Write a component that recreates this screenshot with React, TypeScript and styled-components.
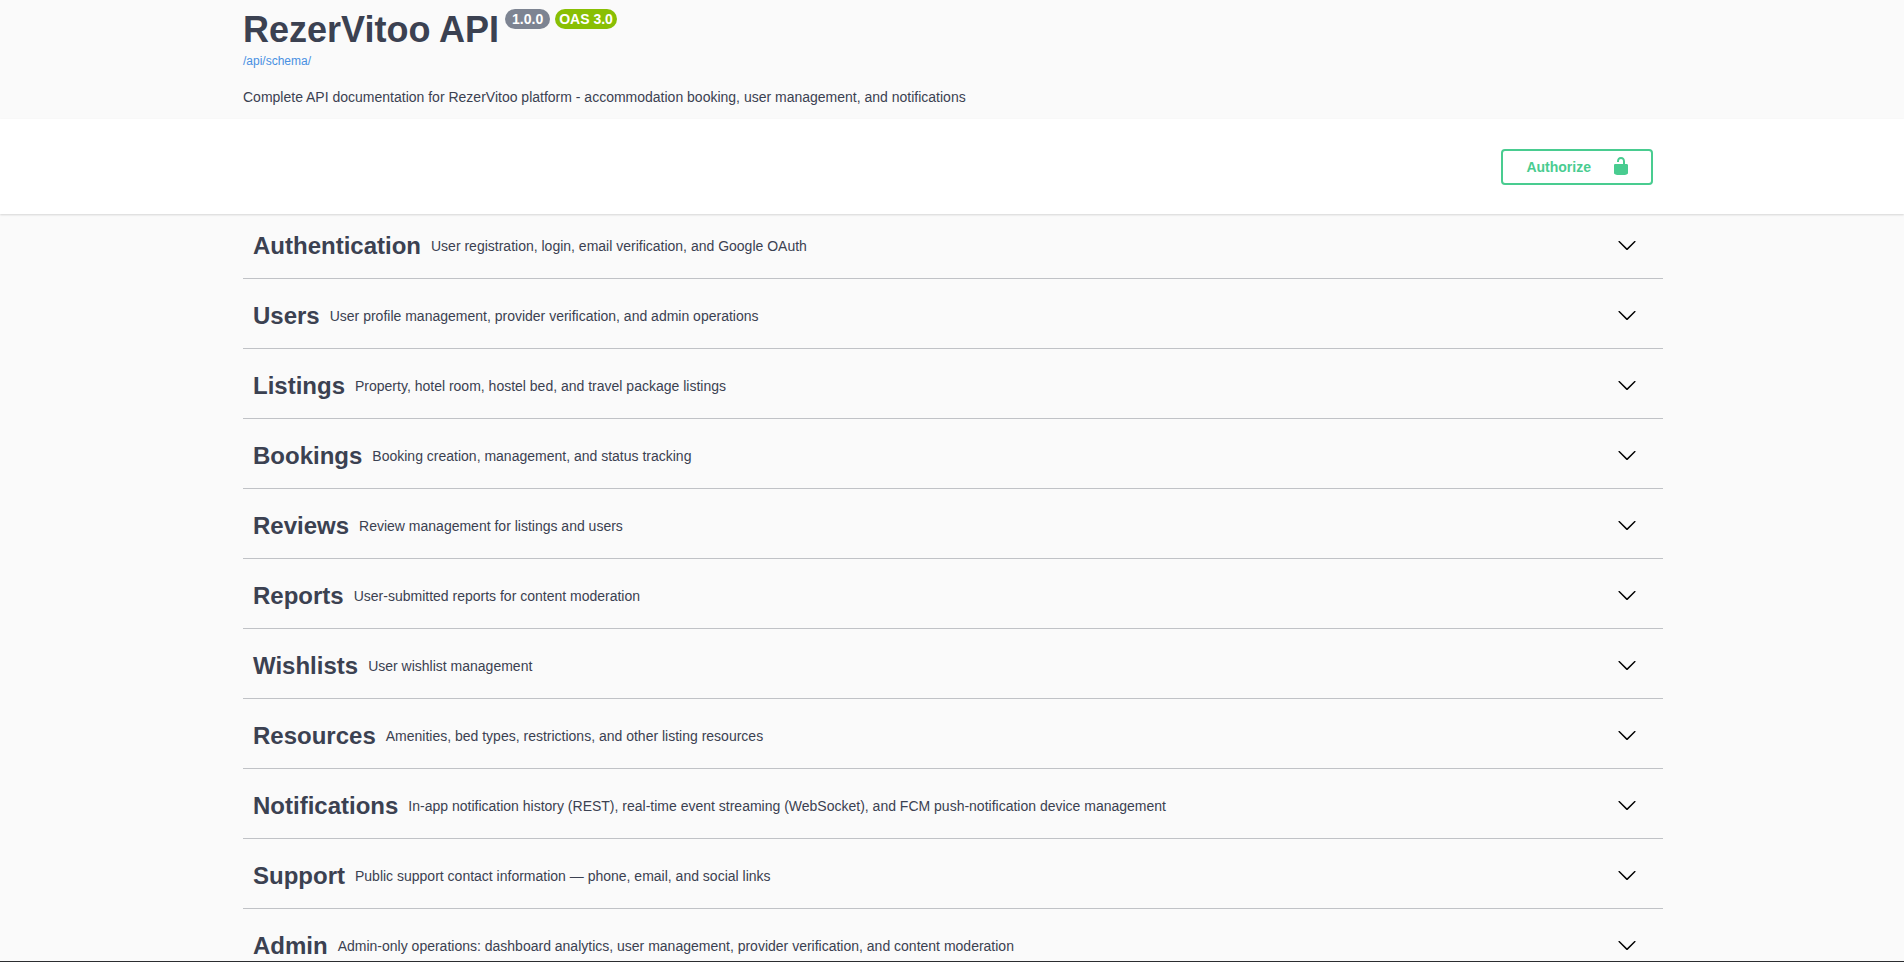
import React from "react";
import styled, { createGlobalStyle } from "styled-components";

const GlobalStyle = createGlobalStyle`
  *, *::before, *::after { box-sizing: border-box; }
  body {
    margin: 0;
    background: #fafafa;
    color: #3b4151;
    font-family: "Liberation Sans", Arial, sans-serif;
  }
`;

const Page = styled.div`
  height: 100vh;
  overflow: hidden;
  background: #fafafa;
  border-bottom: 1px solid #2b2d30;
`;

const Wrapper = styled.div`
  width: 100%;
  max-width: 1460px;
  margin: 0 auto;
  padding: 0 19px 0 21px;
`;

const Info = styled.header`
  padding: 9px 0 11px;
`;

const TitleRow = styled.div`
  display: flex;
  align-items: flex-start;
  gap: 6px;
`;

const Title = styled.h1`
  margin: 0;
  font-size: 36px;
  line-height: 42px;
  font-weight: 700;
`;

const Badges = styled.div`
  display: flex;
  gap: 5px;
`;

const Badge = styled.span<{ $color: string; $pad: number }>`
  height: 20px;
  padding: 0 ${(p) => p.$pad}px;
  border-radius: 10px;
  background: ${(p) => p.$color};
  color: #fff;
  font-size: 14px;
  line-height: 20px;
  font-weight: 700;
`;

const SchemaLink = styled.a`
  display: block;
  width: max-content;
  color: #4990e2;
  font-size: 12px;
  line-height: 20px;
  text-decoration: none;
`;

const Summary = styled.p`
  margin: 16px 0 0;
  font-size: 14px;
  line-height: 21px;
`;

const SchemeBar = styled.div`
  padding: 30px 0 29px;
  background: #fff;
  box-shadow: 0 1px 2px rgba(0, 0, 0, 0.15);
`;

const AuthArea = styled.div`
  display: flex;
  justify-content: flex-end;
  padding-right: 10px;
`;

const AuthorizeButton = styled.button`
  display: flex;
  align-items: center;
  gap: 20px;
  height: 36px;
  padding: 0 20px 0 23px;
  border: 2px solid #49cc90;
  border-radius: 4px;
  background: transparent;
  color: #49cc90;
  font-family: inherit;
  font-size: 14px;
  font-weight: 700;
  cursor: pointer;

  svg {
    margin-bottom: 2px;
  }
`;

const Icon = styled.svg`
  display: block;
  width: 20px;
  height: 20px;
  fill: currentColor;
`;

const TagRow = styled.section`
  display: flex;
  align-items: center;
  height: 65px;
  margin-bottom: 5px;
  padding: 0 26px 0 10px;
  border-bottom: 1px solid rgba(59, 65, 81, 0.3);
`;

const TagName = styled.h3`
  margin: 0;
  font-size: 24px;
  line-height: 44px;
  font-weight: 700;
`;

const TagLink = styled.a`
  color: inherit;
  text-decoration: none;
`;

const TagText = styled.p`
  flex: 1;
  margin: 0;
  padding: 0 10px;
  font-size: 14px;
  line-height: 20px;
`;

const ExpandButton = styled.button`
  padding: 0 0 2px;
  border: 0;
  background: none;
  color: #000;
  cursor: pointer;
`;

const tags = [
  ["Authentication", "User registration, login, email verification, and Google OAuth"],
  ["Users", "User profile management, provider verification, and admin operations"],
  ["Listings", "Property, hotel room, hostel bed, and travel package listings"],
  ["Bookings", "Booking creation, management, and status tracking"],
  ["Reviews", "Review management for listings and users"],
  ["Reports", "User-submitted reports for content moderation"],
  ["Wishlists", "User wishlist management"],
  ["Resources", "Amenities, bed types, restrictions, and other listing resources"],
  [
    "Notifications",
    "In-app notification history (REST), real-time event streaming (WebSocket), and FCM push-notification device management",
  ],
  ["Support", "Public support contact information — phone, email, and social links"],
  [
    "Admin",
    "Admin-only operations: dashboard analytics, user management, provider verification, and content moderation",
  ],
];

const UnlockedIcon = () => (
  <Icon viewBox="0 0 20 20" aria-hidden="true">
    <path d="M15.8 8H14V5.6C14 2.703 12.665 1 10 1 7.334 1 6 2.703 6 5.6V6h2v-.801C8 3.754 8.797 3 10 3c1.203 0 2 .754 2 2.199V8H4c-.553 0-1 .646-1 1.199V17c0 .549.428 1.139.951 1.307l1.197.387C5.672 18.861 6.55 19 7.1 19h5.8c.549 0 1.428-.139 1.951-.307l1.196-.387c.524-.167.953-.757.953-1.306V9.199C17 8.646 16.352 8 15.8 8z" />
  </Icon>
);

const ArrowDownIcon = () => (
  <Icon viewBox="0 0 20 20" aria-hidden="true">
    <path d="M17.418 6.109c.272-.268.709-.268.979 0s.271.701 0 .969l-7.908 7.83c-.27.268-.707.268-.979 0l-7.908-7.83c-.27-.268-.27-.701 0-.969.271-.268.709-.268.979 0L10 13.25l7.418-7.141z" />
  </Icon>
);

export default function App() {
  return (
    <>
      <GlobalStyle />
      <Page>
        <Wrapper>
          <Info>
            <TitleRow>
              <Title>RezerVitoo API</Title>
              <Badges>
                <Badge $color="#7d8492" $pad={7}>1.0.0</Badge>
                <Badge $color="#89bf04" $pad={4}>OAS 3.0</Badge>
              </Badges>
            </TitleRow>
            <SchemaLink href="/api/schema/">/api/schema/</SchemaLink>
            <Summary>
              Complete API documentation for RezerVitoo platform - accommodation booking, user
              management, and notifications
            </Summary>
          </Info>
        </Wrapper>
        <SchemeBar>
          <Wrapper>
            <AuthArea>
              <AuthorizeButton type="button">
                Authorize
                <UnlockedIcon />
              </AuthorizeButton>
            </AuthArea>
          </Wrapper>
        </SchemeBar>
        <Wrapper as="main">
          {tags.map(([name, text]) => (
            <TagRow key={name}>
              <TagName>
                <TagLink href={`#/${name}`}>{name}</TagLink>
              </TagName>
              <TagText>{text}</TagText>
              <ExpandButton type="button" aria-label={`Expand ${name}`} aria-expanded="false">
                <ArrowDownIcon />
              </ExpandButton>
            </TagRow>
          ))}
        </Wrapper>
      </Page>
    </>
  );
}
